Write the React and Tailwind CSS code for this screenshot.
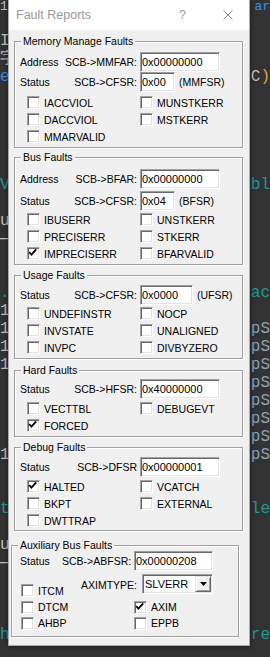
import React from "react"

const gray = "text-[#c4c4c4]"
const blue = "text-[#3f8fe6]"
const teal = "text-[#1f9a9a]"
const slate = "text-[#8ea2b8]"

// editor lines behind the dialog, only their edges show
const lines = [
  {},
  { l: "IT", lc: gray },
  { l: "字", lc: gray },
  {
    l: "e",
    lc: blue,
    r: (
      <>
        <span className={gray}>C</span>
        <span className="text-[#e5a03a]">)</span>
      </>
    ),
  },
  {}, {}, {}, {}, {},
  { l: "V", lc: teal, r: "abl", rc: teal },
  {},
  { l: "u", lc: gray },
  { l: "—", lc: gray },
  {}, {},
  { l: ".", lc: teal, r: "tac", rc: teal },
  { l: "1", lc: gray },
  { l: "1", lc: gray, r: "pS", rc: slate },
  { l: "1", lc: gray, r: "pS", rc: slate },
  { l: "1", lc: gray, r: "pS", rc: slate },
  { r: "pS", rc: slate },
  { r: "pS", rc: slate },
  { r: "pS", rc: slate },
  { r: "pS", rc: slate },
  { l: "1", lc: gray, r: "pS", rc: slate },
  {}, {},
  { l: "t", lc: teal, r: "lle", rc: teal },
  {},
  { l: "u", lc: gray },
  { l: "—", lc: gray },
  {}, {}, {},
  { l: "h", lc: teal, r: "re", rc: teal },
  {},
]

const sunken =
  "border border-t-[#a0a0a0] border-l-[#a0a0a0] border-r-white border-b-white shadow-[inset_1px_1px_0_#696969,inset_-1px_-1px_0_#e3e3e3]"
const raised =
  "border border-t-[#e3e3e3] border-l-[#e3e3e3] border-r-[#696969] border-b-[#696969] shadow-[inset_1px_1px_0_#fff,inset_-1px_-1px_0_#a0a0a0]"

const Check = ({ label, checked }) => (
  <div className="flex items-center gap-[4px] whitespace-nowrap">
    <span className={`w-[13px] h-[13px] shrink-0 bg-white ${sunken}`}>
      {checked && (
        <svg width="11" height="11" viewBox="0 0 11 11" className="block">
          <path d="M1.2 4.2L3.4 6.6L8.2 1.4" fill="none" stroke="#000" strokeWidth="1.8" />
        </svg>
      )}
    </span>
    <span>{label}</span>
  </div>
)

const Field = ({ value, className }) => (
  <div className={`h-[20px] bg-white pl-[1px] flex items-center text-[11px] ${sunken} ${className}`}>
    {value}
  </div>
)

const RegRow = ({ name, reg, value, w, suffix, className = "" }) => (
  <div className={`flex items-center h-[20px] pl-[5px] ${className}`}>
    <span className="w-[44px]">{name}</span>
    <span className="w-[73px] text-right whitespace-nowrap">{reg}</span>
    <Field value={value} className={`ml-[3px] ${w}`} />
    {suffix && <span className="ml-[4px]">{suffix}</span>}
  </div>
)

const Group = ({ title, className, children }) => (
  <div
    className={`relative shrink-0 border border-[#a0a0a0] shadow-[inset_1px_1px_0_#fff,1px_1px_0_#fff] ${className}`}
  >
    <span className="absolute -top-[8px] left-[6px] px-[2px] bg-[#f0f0f0] leading-[14px] whitespace-nowrap">
      {title}
    </span>
    {children}
  </div>
)

const Checks = ({ items, className = "" }) => (
  <div className={`grid grid-cols-[113px_1fr] auto-rows-[17px] pl-[12px] ${className}`}>
    {items.map((it, i) =>
      it ? <Check key={i} label={it.label} checked={it.checked} /> : <div key={i} />
    )}
  </div>
)

export default function App() {
  return (
    <div className="relative w-[270px] h-[657px] overflow-hidden bg-[#333333] font-['Liberation_Mono',monospace] text-[16px]">
      <div className="flex flex-col">
        <div className="h-[14px] leading-[14px] text-[13px] flex justify-between whitespace-nowrap">
          <span className={gray}>1</span>
          <span className={blue}>ar</span>
        </div>
        {lines.map((ln, i) => (
          <div key={i} className="h-[18px] leading-[18px] flex justify-between whitespace-nowrap">
            <span className={ln.lc || ""}>{ln.l || ""}</span>
            <span className={ln.rc || ""}>{ln.r || ""}</span>
          </div>
        ))}
      </div>

      <div className="absolute left-[8px] top-0 w-[242px] h-[646px] flex flex-col bg-[#f0f0f0] border border-t-0 border-[#aaaaaa] shadow-[0_0_6px_rgba(0,0,0,0.55)] font-['Liberation_Sans',Arial,sans-serif] text-[10.5px] text-black leading-[14px]">
        <div className="h-[30px] shrink-0 bg-white flex items-center pl-[7px] pr-[16px] text-[#999999] text-[12.5px]">
          <span>Fault Reports</span>
          <span className="ml-auto">?</span>
          <svg width="10" height="10" viewBox="0 0 10 10" className="ml-[37px]">
            <path d="M0.5 0.5L9.5 9.5M9.5 0.5L0.5 9.5" stroke="#8a8a8a" strokeWidth="1" />
          </svg>
        </div>

        <Group title="Memory Manage Faults" className="ml-[5px] mt-[11px] w-[229px] h-[107px] pt-[10px]">
          <RegRow name="Address" reg="SCB->MMFAR:" value="0x00000000" w="w-[80px]" />
          <RegRow name="Status" reg="SCB->CFSR:" value="0x00" w="w-[35px]" suffix="(MMFSR)" />
          <Checks
            className="mt-[2px]"
            items={[
              { label: "IACCVIOL" },
              { label: "MUNSTKERR" },
              { label: "DACCVIOL" },
              { label: "MSTKERR" },
              { label: "MMARVALID" },
            ]}
          />
        </Group>

        <Group title="Bus Faults" className="ml-[5px] mt-[9px] w-[229px] h-[108px] pt-[11px]">
          <RegRow name="Address" reg="SCB->BFAR:" value="0x00000000" w="w-[80px]" />
          <RegRow name="Status" reg="SCB->CFSR:" value="0x04" w="w-[35px]" suffix="(BFSR)" className="mt-[2px]" />
          <Checks
            items={[
              { label: "IBUSERR" },
              { label: "UNSTKERR" },
              { label: "PRECISERR" },
              { label: "STKERR" },
              { label: "IMPRECISERR", checked: true },
              { label: "BFARVALID" },
            ]}
          />
        </Group>

        <Group title="Usage Faults" className="ml-[5px] mt-[10px] w-[229px] h-[84px] pt-[9px]">
          <RegRow name="Status" reg="SCB->CFSR:" value="0x0000" w="w-[53px]" suffix="(UFSR)" />
          <Checks
            items={[
              { label: "UNDEFINSTR" },
              { label: "NOCP" },
              { label: "INVSTATE" },
              { label: "UNALIGNED" },
              { label: "INVPC" },
              { label: "DIVBYZERO" },
            ]}
          />
        </Group>

        <Group title="Hard Faults" className="ml-[5px] mt-[11px] w-[229px] h-[67px] pt-[8px]">
          <RegRow name="Status" reg="SCB->HFSR:" value="0x40000000" w="w-[80px]" />
          <Checks
            className="mt-[1px] auto-rows-[16px]"
            items={[{ label: "VECTTBL" }, { label: "DEBUGEVT" }, { label: "FORCED", checked: true }]}
          />
        </Group>

        <Group title="Debug Faults" className="ml-[5px] mt-[10px] w-[229px] h-[84px] pt-[9px]">
          <RegRow name="Status" reg="SCB->DFSR" value="0x00000001" w="w-[80px]" />
          <Checks
            className="mt-[1px]"
            items={[
              { label: "HALTED", checked: true },
              { label: "VCATCH" },
              { label: "BKPT" },
              { label: "EXTERNAL" },
              { label: "DWTTRAP" },
            ]}
          />
        </Group>

        <Group title="Auxiliary Bus Faults" className="ml-[2px] mt-[14px] w-[228px] h-[92px] pt-[5px]">
          <div className="flex items-center h-[20px] pl-[8px]">
            <span className="w-[42px]">Status</span>
            <span className="w-[69px] text-right whitespace-nowrap">SCB-&gt;ABFSR:</span>
            <Field value="0x00000208" className="ml-[3px] w-[79px]" />
          </div>
          <div className="mt-[3px] flex h-[25px] pl-[9px]">
            <div className="w-[60px] h-[17px] self-end flex items-center">
              <Check label="ITCM" />
            </div>
            <div className="flex items-center h-[20px]">
              <span className="w-[61px] pt-[2px] whitespace-nowrap">AXIMTYPE:</span>
              <div className={`w-[71px] h-[20px] bg-white flex items-center justify-between pl-[2px] pr-[1px] text-[11px] ${sunken}`}>
                <span>SLVERR</span>
                <span className={`w-[16px] h-[16px] bg-[#f0f0f0] flex items-center justify-center ${raised}`}>
                  <svg width="7" height="4" viewBox="0 0 7 4">
                    <path d="M0 0H7L3.5 4Z" fill="#000" />
                  </svg>
                </span>
              </div>
            </div>
          </div>
          <div className="grid grid-cols-[113px_1fr] auto-rows-[16px] pl-[9px]">
            <Check label="DTCM" />
            <Check label="AXIM" checked />
            <Check label="AHBP" />
            <Check label="EPPB" />
          </div>
        </Group>
      </div>
    </div>
  )
}
